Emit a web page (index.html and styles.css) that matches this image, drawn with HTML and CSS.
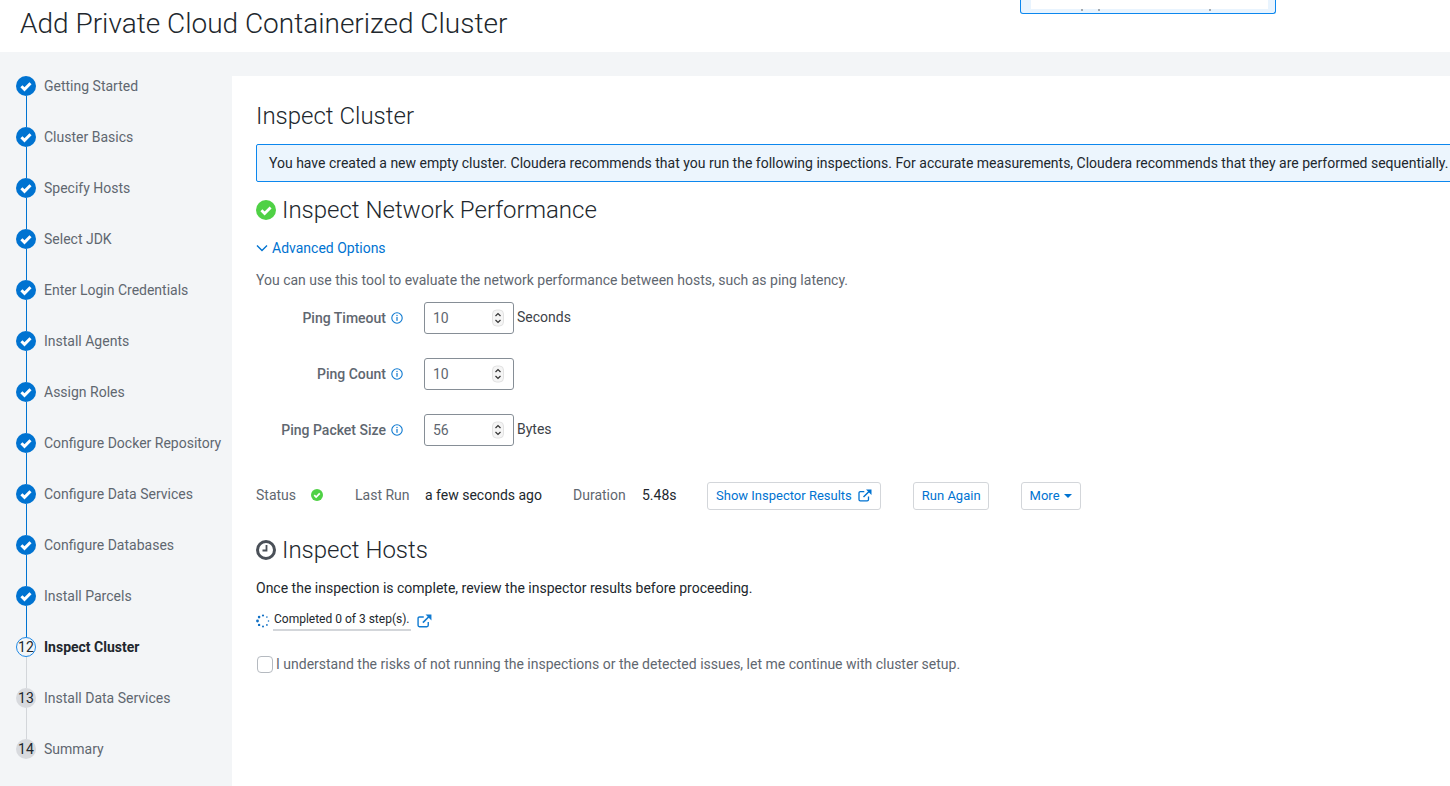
FILE: index.html
```html
<!DOCTYPE html>
<html lang="en">
<head>
<meta charset="utf-8">
<title>Add Private Cloud Containerized Cluster</title>
<link rel="stylesheet" href="styles.css">
</head>
<body>
<svg class="defs" width="0" height="0" aria-hidden="true">
  <symbol id="done" viewBox="0 0 20 20"><circle cx="10" cy="10" r="10" fill="#0073d1"/><path d="M5.400 10.200l3.100 3.100 6-6" fill="none" stroke="#fff" stroke-width="3"/></symbol>
  <symbol id="ok" viewBox="0 0 20 20"><circle cx="10" cy="10" r="10" fill="#4fd145"/><path d="M5.400 10.200l3.200 3.200 6-6" fill="none" stroke="#fff" stroke-width="2.800"/></symbol>
  <symbol id="info" viewBox="0 0 12 12"><circle cx="6" cy="6" r="5.200" fill="none" stroke="#0f7ad1" stroke-width="1.100"/><rect x="5.400" y="5" width="1.200" height="3.800" fill="#0f7ad1"/><rect x="5.400" y="2.900" width="1.200" height="1.200" fill="#0f7ad1"/></symbol>
  <symbol id="ext" viewBox="0 0 14 13"><path d="M10.500 7.500v3a1.300 1.300 0 0 1-1.300 1.300H2.300A1.300 1.300 0 0 1 1 10.500V4a1.300 1.300 0 0 1 1.300-1.300h4" fill="none" stroke="currentColor" stroke-width="1.300"/><path d="M5.500 8L11 2.500" fill="none" stroke="currentColor" stroke-width="1.500"/><path d="M8 .5h5.500V6z" fill="currentColor"/></symbol>
  <symbol id="stepper" viewBox="0 0 12 18"><rect x=".5" y="1" width="11" height="16" rx="4" fill="#f5f5f5" stroke="#e2e2e2"/><path d="M3.500 7l2.500-2.500L8.500 7M3.500 11l2.500 2.500 2.500-2.500" fill="none" stroke="#333" stroke-width="1.200"/></symbol>
</svg>
<header class="page-header">
  <h1>Add Private Cloud Containerized Cluster</h1>
  <div class="popup"><div class="popup-inner"></div><i class="speck s1"></i><i class="speck s2"></i><i class="speck s3"></i></div>
</header>
<div class="layout">
  <nav class="steps">
    <div class="step done"><svg class="badge"><use href="#done"/></svg><span>Getting Started</span></div>
    <div class="step done"><svg class="badge"><use href="#done"/></svg><span>Cluster Basics</span></div>
    <div class="step done"><svg class="badge"><use href="#done"/></svg><span>Specify Hosts</span></div>
    <div class="step done"><svg class="badge"><use href="#done"/></svg><span>Select JDK</span></div>
    <div class="step done"><svg class="badge"><use href="#done"/></svg><span>Enter Login Credentials</span></div>
    <div class="step done"><svg class="badge"><use href="#done"/></svg><span>Install Agents</span></div>
    <div class="step done"><svg class="badge"><use href="#done"/></svg><span>Assign Roles</span></div>
    <div class="step done"><svg class="badge"><use href="#done"/></svg><span>Configure Docker Repository</span></div>
    <div class="step done"><svg class="badge"><use href="#done"/></svg><span>Configure Data Services</span></div>
    <div class="step done"><svg class="badge"><use href="#done"/></svg><span>Configure Databases</span></div>
    <div class="step done"><svg class="badge"><use href="#done"/></svg><span>Install Parcels</span></div>
    <div class="step current"><div class="badge num">12</div><span>Inspect Cluster</span></div>
    <div class="step todo"><div class="badge num">13</div><span>Install Data Services</span></div>
    <div class="step todo last"><div class="badge num">14</div><span>Summary</span></div>
  </nav>
  <main class="content">
    <h2 class="page-title">Inspect Cluster</h2>
    <div class="alert">You have created a new empty cluster. Cloudera recommends that you run the following inspections. For accurate measurements, Cloudera recommends that they are performed sequentially.</div>
    <h3 class="section first"><svg class="section-icon"><use href="#ok"/></svg>Inspect Network Performance</h3>
    <a class="advanced"><svg class="chev" viewBox="0 0 12 8"><path d="M1 1.500l5 5 5-5" fill="none" stroke="currentColor" stroke-width="1.400"/></svg>Advanced Options</a>
    <p class="hint">You can use this tool to evaluate the network performance between hosts, such as ping latency.</p>
    <div class="field">
      <label>Ping Timeout<svg class="info"><use href="#info"/></svg></label>
      <div class="number"><span>10</span><svg class="spinner"><use href="#stepper"/></svg></div>
      <span class="unit">Seconds</span>
    </div>
    <div class="field">
      <label>Ping Count<svg class="info"><use href="#info"/></svg></label>
      <div class="number"><span>10</span><svg class="spinner"><use href="#stepper"/></svg></div>
    </div>
    <div class="field">
      <label>Ping Packet Size<svg class="info"><use href="#info"/></svg></label>
      <div class="number"><span>56</span><svg class="spinner"><use href="#stepper"/></svg></div>
      <span class="unit">Bytes</span>
    </div>
    <div class="status-row">
      <span class="muted w-status">Status</span>
      <svg class="status-icon"><use href="#ok"/></svg>
      <span class="muted w-last">Last Run</span>
      <span class="value w-ago">a few seconds ago</span>
      <span class="muted w-dur">Duration</span>
      <span class="value w-time">5.48s</span>
      <button class="btn w-show">Show Inspector Results<svg class="ext"><use href="#ext"/></svg></button>
      <button class="btn w-run">Run Again</button>
      <button class="btn">More<i class="caret"></i></button>
    </div>
    <h3 class="section hosts"><svg class="section-icon" viewBox="0 0 20 20"><circle cx="10" cy="10" r="8.500" fill="none" stroke="#4a5058" stroke-width="3"/><path d="M10.500 5v5.500H6.500" fill="none" stroke="#4a5058" stroke-width="1.800"/></svg>Inspect Hosts</h3>
    <p class="note">Once the inspection is complete, review the inspector results before proceeding.</p>
    <div class="progress">
      <svg class="dots" viewBox="0 0 14 14"><g fill="#0f6fc4"><circle cx="7" cy="1.500" r="1.100"/><circle cx="10.900" cy="3.100" r=".8"/><circle cx="12.500" cy="7" r=".8"/><circle cx="10.900" cy="10.900" r=".9"/><circle cx="7" cy="12.500" r="1"/><circle cx="3.100" cy="10.900" r="1.200"/><circle cx="1.500" cy="7" r="1.400"/><circle cx="3.100" cy="3.100" r="1.300"/></g></svg>
      <span class="progress-text">Completed 0 of 3 step(s).</span>
      <svg class="ext-big"><use href="#ext"/></svg>
    </div>
    <label class="confirm"><i class="check"></i>I understand the risks of not running the inspections or the detected issues, let me continue with cluster setup.</label>
  </main>
</div>
</body>
</html>
```
FILE: styles.css
```css
* { box-sizing: border-box; }
html, body { margin: 0; height: 100%; overflow: hidden; }
body { font-family: Roboto, "Liberation Sans", sans-serif; font-size: 14px; color: #21272d; background: #f3f5f7; width: 1450px; height: 786px; }
.defs { position: absolute; }
.page-header { height: 52px; background: #fff; padding: 6px 20px 0; position: relative; }
.page-header h1 { margin: 0; font-size: 28px; font-weight: 300; line-height: 36px; color: #21272d; }
.popup { position: absolute; left: 1020px; top: 0; width: 256px; height: 14px; background: #e9f4fe; border: 1px solid #0c87ee; border-top: 0; border-radius: 0 0 3px 3px; padding: 0 7px 0 10px; }
.popup-inner { height: 9px; background: #fff; }
.speck { position: absolute; top: 9px; width: 2px; height: 2px; background: #a3a9af; }
.s1 { left: 60px; }
.s2 { left: 77px; }
.s3 { left: 188px; }
.layout { display: flex; height: 734px; }
.steps { width: 232px; flex: none; padding-top: 24px; }
.step { height: 51px; display: flex; align-items: flex-start; padding-left: 16px; position: relative; color: #5f6770; line-height: 20px; }
.step span { margin-left: 8px; }
.step::after { content: ""; position: absolute; left: 25.500px; top: 20px; width: 1px; height: 31px; background: #d3d6da; }
.step.done::after { background: #0073d1; }
.step.last::after { display: none; }
.badge { width: 20px; height: 20px; flex: none; }
.num { border-radius: 50%; background: #d8dade; font-size: 14px; line-height: 20px; letter-spacing: .2px; text-align: center; color: #21272d; }
.current .num { background: transparent; border: 1px solid #1e88e5; line-height: 18px; }
.current span { font-weight: 700; color: #21272d; }
.content { flex: 1; min-width: 0; background: #fff; margin-top: 24px; padding: 24px; overflow: hidden; }
.page-title { margin: 0; font-size: 24px; font-weight: 300; line-height: 32px; }
.alert { margin-top: 12px; width: 1300px; height: 38px; padding-left: 12px; border: 1px solid #0c87ee; border-radius: 2px; background: #ecf5fd; line-height: 36px; white-space: nowrap; }
.section { margin: 0; display: flex; align-items: center; font-size: 24px; font-weight: 300; line-height: 32px; }
.section.first { margin-top: 12px; }
.section.hosts { margin-top: 25px; }
.section-icon { width: 20px; height: 20px; margin-right: 6px; }
.advanced { display: flex; align-items: center; margin-top: 12px; height: 20px; color: #0073d1; }
.chev { width: 12px; height: 8px; margin-right: 4px; }
.hint { margin: 12px 0 0; line-height: 20px; color: #5f6770; }
.field { display: flex; align-items: center; height: 32px; margin-top: 24px; }
.hint + .field { margin-top: 12px; }
.field label { width: 147px; display: flex; justify-content: flex-end; align-items: center; font-weight: 500; color: #5f6770; }
.info { width: 12px; height: 12px; margin-left: 5px; }
.number { margin-left: 21px; width: 90px; height: 32px; border: 1px solid #868e96; border-radius: 3px; display: flex; align-items: center; justify-content: space-between; padding: 0 9px 0 8px; color: #5f6770; }
.spinner { width: 12px; height: 18px; }
.unit { margin-left: 3px; margin-top: -2px; color: #3d4248; }
.status-row { display: flex; align-items: center; height: 28px; margin-top: 35px; }
.muted { color: #5f6770; }
.value { color: #21272d; }
.w-status { width: 55px; }
.status-icon { width: 12px; height: 12px; margin-right: 32px; }
.w-last { width: 70px; }
.w-ago { width: 148px; }
.w-dur { width: 69px; }
.w-time { width: 65px; }
.btn { height: 28px; margin-top: 2px; padding: 0 8px 2px; border: 1px solid #d3d6da; border-radius: 3px; background: #fff; color: #0073d1; font: 13px Roboto, "Liberation Sans", sans-serif; display: inline-flex; align-items: center; }
.w-show { margin-right: 32px; }
.w-run { margin-right: 32px; padding-right: 7px; }
.ext { width: 14px; height: 13px; margin-left: 6px; }
.caret { width: 0; height: 0; margin-left: 4px; margin-top: 2px; border: 4px solid transparent; border-top-color: #0073d1; border-bottom: 0; }
.note { margin: 12px 0 0; line-height: 20px; color: #21272d; }
.progress { display: flex; align-items: center; margin-top: 12px; height: 22px; }
.dots { width: 14px; height: 14px; }
.progress-text { margin-left: 3px; padding: 0 1px 1px 1px; border-bottom: 2px solid #d3d6da; font-size: 12px; line-height: 17px; }
.ext-big { width: 15px; height: 14px; margin-left: 6px; color: #0f7ad1; }
.confirm { display: flex; align-items: center; margin-top: 22px; height: 20px; color: #5f6770; }
.check { width: 16px; height: 17px; border: 1px solid #b5bac0; border-radius: 4px; margin: 0 3px 0 1px; }
```
